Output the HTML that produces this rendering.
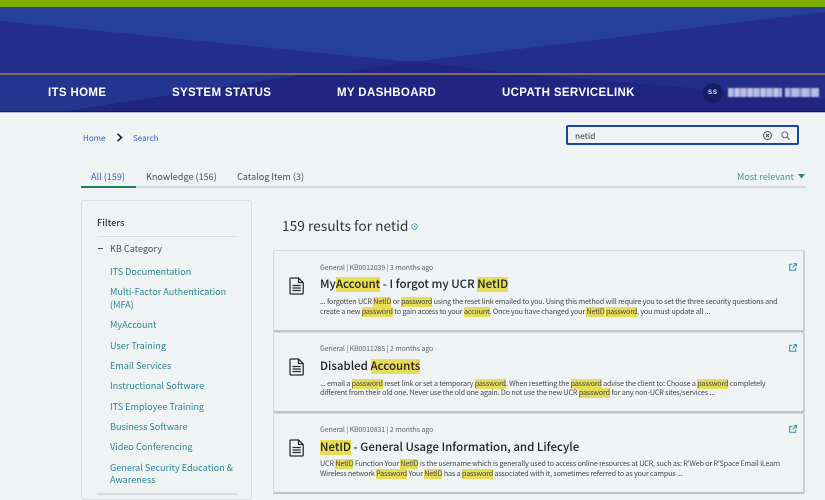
<!DOCTYPE html>
<html lang="en"><head><meta charset="utf-8"><title>Search</title>
<style>
html,body{margin:0;padding:0}
body{width:825px;height:495px;overflow:hidden;position:relative;background:#f0f3f4;font-family:"Noto Sans CJK SC","Liberation Sans",sans-serif;color:#3a3d40}
.a{position:absolute;white-space:nowrap}
.nav{font:bold 11.5px/16px "Liberation Sans",sans-serif;color:#fff;letter-spacing:.35px;top:85px}
.cat{left:110px;font-size:9.1px;line-height:13px;color:#2a8494}
.card{position:absolute;left:273px;width:532px;background:#f0f3f4;border:1px solid #d6d9da;border-bottom:2px solid #bfc3c4;border-right:2px solid #c9cccd;border-radius:2px;box-sizing:border-box}
.meta{left:320px;font-size:7px;line-height:11px;color:#5f6468;letter-spacing:-.08px}
.title{left:320px;font-size:11.5px;line-height:18px;font-weight:500;color:#1f2225}
.body{left:320px;font-size:7.2px;line-height:10px;color:#44484c;letter-spacing:-.16px}
mark{background:#e7dc58;color:inherit;display:inline-block}
.title mark{line-height:15px;padding:0}
.body mark{line-height:10px}
svg{position:absolute;overflow:visible}
</style></head><body>

<div class="a" style="left:0;top:0;width:825px;height:7px;background:#7bad00"></div>
<div class="a" style="left:0;top:7px;width:825px;height:105px;background:#26409a;overflow:hidden">
<svg style="left:0;top:0" width="825" height="105" viewBox="0 7 825 105">
<path fill="#232e8a" d="M0 21 L412 62 L825 12 V112 H0Z"/>
<path fill="#24358f" d="M0 75 H300 L70 112 H0Z"/>
<path fill="#1f2580" d="M340 73 L412 61 L510 73 L825 99 V112 H60 L300 75Z"/>
</svg>
</div>
<div class="a" style="left:0;top:73px;width:825px;height:2px;background:#7b6a70"></div>
<div class="a" style="left:0;top:111px;width:825px;height:1px;background:#10186e"></div>
<div class="a" style="left:0;top:112px;width:825px;height:1px;background:#b5b9d8"></div>

<div class="a nav" style="left:48px">ITS HOME</div>
<div class="a nav" style="left:172px">SYSTEM STATUS</div>
<div class="a nav" style="left:337px">MY DASHBOARD</div>
<div class="a nav" style="left:502px">UCPATH SERVICELINK</div>
<div class="a" style="left:703px;top:83px;width:20px;height:20px;border-radius:50%;background:#161e66;color:#e8eaf4;font:bold 6px/20px 'Liberation Sans',sans-serif;text-align:center;letter-spacing:1px">SS</div>
<div class="a" style="left:728px;top:88px;width:54px;height:9px;filter:blur(.7px);background:repeating-linear-gradient(90deg,#b8bde2 0 5px,#8a92cc 5px 7px,#c4c8e8 7px 11px,#969dd0 11px 13px)"></div>
<div class="a" style="left:785px;top:88px;width:34px;height:9px;filter:blur(.7px);background:repeating-linear-gradient(90deg,#b4b9e0 0 4px,#858dca 4px 7px,#bcc1e4 7px 10px)"></div>

<div class="a" style="left:83px;top:133px;font-size:8px;line-height:12px;color:#2f5fb0">Home</div>
<svg style="left:116px;top:133px" width="7" height="9" viewBox="0 0 7 9"><path d="M1.5 .8 L5.5 4.5 L1.5 8.2" fill="none" stroke="#222" stroke-width="1.6"/></svg>
<div class="a" style="left:133px;top:133px;font-size:8px;line-height:12px;color:#2f5fb0">Search</div>

<div class="a" style="left:566px;top:125px;width:233px;height:20px;box-sizing:border-box;border:2px solid #17479e;border-radius:2px;background:#f0f3f4"></div>
<div class="a" style="left:575px;top:130px;font-size:8.4px;line-height:13px;color:#333">netid</div>
<svg style="left:763px;top:131px" width="9" height="9" viewBox="0 0 9 9"><circle cx="4.5" cy="4.5" r="3.9" fill="none" stroke="#444" stroke-width=".9"/><path d="M3 3 L6 6 M6 3 L3 6" stroke="#444" stroke-width=".9"/></svg>
<svg style="left:781px;top:131px" width="9" height="9" viewBox="0 0 9 9"><circle cx="3.8" cy="3.8" r="3" fill="none" stroke="#555" stroke-width=".9"/><path d="M6 6 L8.6 8.6" stroke="#555" stroke-width="1"/></svg>

<div class="a" style="left:91px;top:170px;font-size:9.1px;line-height:13px;color:#2f5fb0">All (159)</div>
<div class="a" style="left:146px;top:170px;font-size:9.1px;line-height:13px;color:#4a4e52">Knowledge (156)</div>
<div class="a" style="left:237px;top:170px;font-size:9.1px;line-height:13px;color:#4a4e52">Catalog Item (3)</div>
<div class="a" style="left:737px;top:170px;font-size:9.05px;line-height:13px;color:#3f9a80">Most relevant</div>
<svg style="left:798px;top:174px" width="7" height="5" viewBox="0 0 7 5"><path d="M0 0H7L3.5 4.6Z" fill="#2f8a70"/></svg>
<div class="a" style="left:81px;top:186px;width:725px;height:2px;background:#d5d8d9"></div>
<div class="a" style="left:81px;top:186px;width:55px;height:2px;background:#217a66"></div>

<div class="a" style="left:81px;top:200px;width:171px;height:300px;box-sizing:border-box;border:1px solid #dcdfe0;border-radius:3px"></div>
<div class="a" style="left:97px;top:216px;font-size:9.2px;line-height:13px;font-weight:500;color:#33363a">Filters</div>
<div class="a" style="left:97px;top:236px;width:140px;height:1px;background:#d9dcdd"></div>
<div class="a" style="left:98px;top:248px;width:5px;height:1px;background:#555"></div>
<div class="a" style="left:110px;top:242px;font-size:9.1px;line-height:13px;color:#4a4e52">KB Category</div>
<div class="a cat" style="top:265px">ITS Documentation</div>
<div class="a cat" style="top:285px">Multi-Factor Authentication</div>
<div class="a cat" style="top:298px">(MFA)</div>
<div class="a cat" style="top:318px">MyAccount</div>
<div class="a cat" style="top:339px">User Training</div>
<div class="a cat" style="top:359px">Email Services</div>
<div class="a cat" style="top:379px">Instructional Software</div>
<div class="a cat" style="top:400px">ITS Employee Training</div>
<div class="a cat" style="top:420px">Business Software</div>
<div class="a cat" style="top:440px">Video Conferencing</div>
<div class="a cat" style="top:461px">General Security Education &amp;</div>
<div class="a cat" style="top:473px">Awareness</div>
<div class="a" style="left:97px;top:493px;width:140px;height:2px;background:#d9dcdd"></div>

<div class="a" style="left:282px;top:216px;font-size:13.75px;line-height:19px;color:#33363a">159 results for netid</div>
<svg style="left:411px;top:223px" width="7" height="7" viewBox="0 0 8 8"><circle cx="4" cy="4" r="3.2" fill="none" stroke="#4a9bb0" stroke-width="1"/><circle cx="4" cy="4" r="1" fill="#4a9bb0"/></svg>

<div class="card" style="top:250px;height:82px"></div>
<div class="card" style="top:332px;height:81px"></div>
<div class="card" style="top:413px;height:81px"></div>

<svg style="left:289px;top:277px" width="15" height="18" viewBox="0 0 15 18"><path d="M1 2 a1 1 0 0 1 1-1 H9.5 L14.2 5.5 V16 a1 1 0 0 1-1 1 H2 a1 1 0 0 1-1-1Z M9.5 1 V5.5 H14.2 M3.5 8.5 H11.8 M3.5 11 H11.8 M3.5 13.5 H11.8" fill="none" stroke="#26292c" stroke-width="1.25"/></svg>
<svg style="left:289px;top:358px" width="15" height="18" viewBox="0 0 15 18"><path d="M1 2 a1 1 0 0 1 1-1 H9.5 L14.2 5.5 V16 a1 1 0 0 1-1 1 H2 a1 1 0 0 1-1-1Z M9.5 1 V5.5 H14.2 M3.5 8.5 H11.8 M3.5 11 H11.8 M3.5 13.5 H11.8" fill="none" stroke="#26292c" stroke-width="1.25"/></svg>
<svg style="left:289px;top:439px" width="15" height="18" viewBox="0 0 15 18"><path d="M1 2 a1 1 0 0 1 1-1 H9.5 L14.2 5.5 V16 a1 1 0 0 1-1 1 H2 a1 1 0 0 1-1-1Z M9.5 1 V5.5 H14.2 M3.5 8.5 H11.8 M3.5 11 H11.8 M3.5 13.5 H11.8" fill="none" stroke="#26292c" stroke-width="1.25"/></svg>

<svg style="left:789px;top:263px" width="8" height="8" viewBox="0 0 8 8"><path d="M3.5 1.2 H.7 V7.3 H6.8 V4.5 M4.5 .6 H7.4 V3.5 M7.2 .8 L3.6 4.4" fill="none" stroke="#2f8fa8" stroke-width="1"/></svg>
<svg style="left:789px;top:344px" width="8" height="8" viewBox="0 0 8 8"><path d="M3.5 1.2 H.7 V7.3 H6.8 V4.5 M4.5 .6 H7.4 V3.5 M7.2 .8 L3.6 4.4" fill="none" stroke="#2f8fa8" stroke-width="1"/></svg>
<svg style="left:789px;top:425px" width="8" height="8" viewBox="0 0 8 8"><path d="M3.5 1.2 H.7 V7.3 H6.8 V4.5 M4.5 .6 H7.4 V3.5 M7.2 .8 L3.6 4.4" fill="none" stroke="#2f8fa8" stroke-width="1"/></svg>

<div class="a meta" style="top:263px">General | KB0012039 | 3 months ago</div>
<div class="a title" style="top:275px">My<mark>Account</mark> - I forgot my UCR <mark>NetID</mark></div>
<div class="a body" style="top:297px">... forgotten UCR <mark>NetID</mark> or <mark>password</mark> using the reset link emailed to you. Using this method will require you to set the three security questions and</div>
<div class="a body" style="top:307px">create a new <mark>password</mark> to gain access to your <mark>account</mark>. Once you have changed your <mark>NetID</mark> <mark>password</mark>, you must update all ...</div>

<div class="a meta" style="top:344px">General | KB0011285 | 2 months ago</div>
<div class="a title" style="top:357px">Disabled <mark>Accounts</mark></div>
<div class="a body" style="top:379px">... email a <mark>password</mark> reset link or set a temporary <mark>password</mark>. When resetting the <mark>password</mark> advise the client to: Choose a <mark>password</mark> completely</div>
<div class="a body" style="top:388px">different from their old one. Never use the old one again. Do not use the new UCR <mark>password</mark> for any non-UCR sites/services ...</div>

<div class="a meta" style="top:425px">General | KB0010831 | 2 months ago</div>
<div class="a title" style="top:438px"><mark>NetID</mark> - General Usage Information, and Lifecyle</div>
<div class="a body" style="top:459px">UCR <mark>NetID</mark> Function Your <mark>NetID</mark> is the username which is generally used to access online resources at UCR, such as: R'Web or R'Space Email iLearn</div>
<div class="a body" style="top:469px">Wireless network <mark>Password</mark> Your <mark>NetID</mark> has a <mark>password</mark> associated with it, sometimes referred to as your campus ...</div>

</body></html>
